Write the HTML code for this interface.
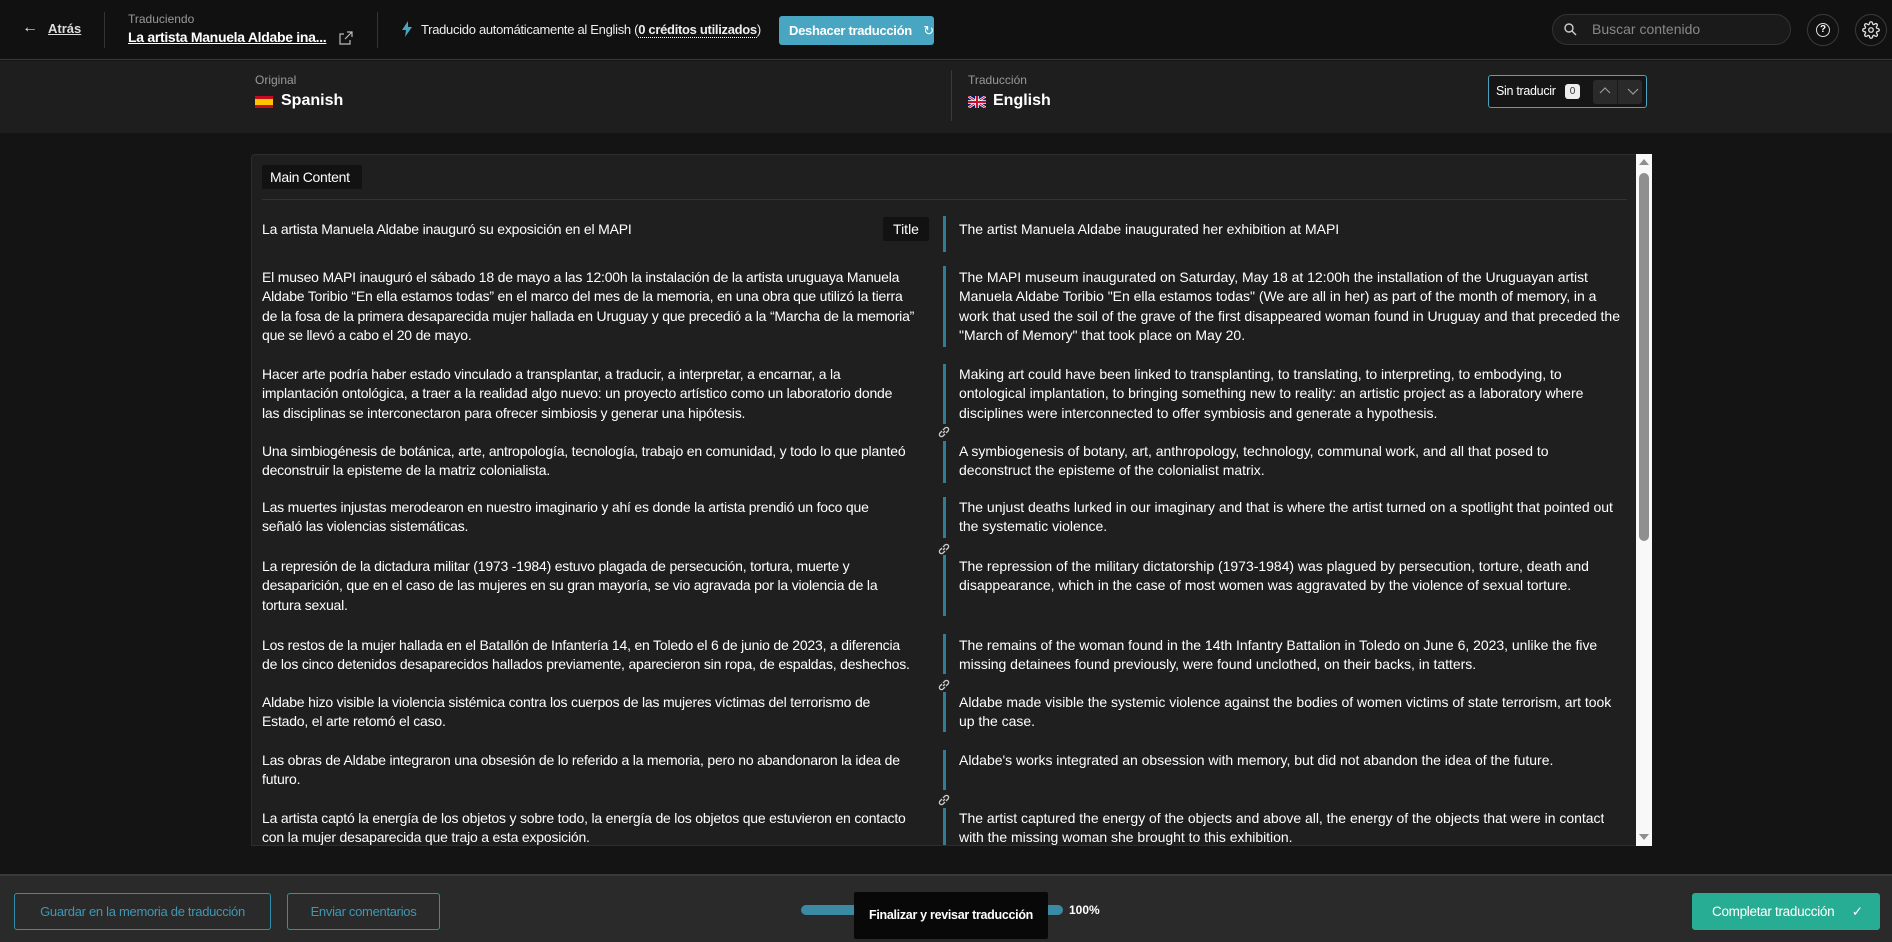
<!DOCTYPE html>
<html><head><meta charset="utf-8"><style>
*{margin:0;padding:0;box-sizing:border-box}
body{width:1892px;height:942px;background:#141414;font-family:"Liberation Sans",sans-serif;color:#fff;position:relative;overflow:hidden}
.a{position:absolute;white-space:nowrap}
.t{font-size:14px;letter-spacing:-0.2px;line-height:19.3px}
.r{letter-spacing:-0.02px}
.bar{position:absolute;left:943px;width:3px;background:#2e7f96}
.lk{position:absolute;left:937px;width:14px;height:14px}
</style></head><body>
<!-- top bar -->
<div class="a" style="left:0;top:0;width:1892px;height:60px;background:#111;border-bottom:1px solid #3a3a3a"></div>
<div class="a" style="left:22px;top:19px;font-size:16px;color:#ddd">←</div>
<div class="a" style="left:48px;top:21px;font-size:13px;text-decoration:underline;font-weight:bold;color:#ddd">Atrás</div>
<div class="a" style="left:104px;top:12px;width:1px;height:36px;background:#333"></div>
<div class="a" style="left:128px;top:12px;font-size:12px;color:#999">Traduciendo</div>
<div class="a" style="left:128px;top:29px;font-size:14px;font-weight:bold;text-decoration:underline;letter-spacing:-0.3px">La artista Manuela Aldabe ina...</div>
<svg class="a" style="left:339px;top:31px" width="14" height="14" viewBox="0 0 14 14" fill="none" stroke="#bbb" stroke-width="1.2"><path d="M8 1h5v5M13 1L6 8M11 9v4H1V3h4"/></svg>
<div class="a" style="left:377px;top:12px;width:1px;height:36px;background:#333"></div>
<svg class="a" style="left:402px;top:21px" width="10" height="16" viewBox="0 0 10 16"><path d="M6 0L0 9h4l-1 7 7-10H6z" fill="#4aa3c0"/></svg>
<div class="a" style="left:421px;top:22px;font-size:13px;letter-spacing:-0.3px;color:#eee">Traducido automáticamente al English (<span style="font-weight:bold;border-bottom:1px dotted #fff">0 créditos utilizados</span>)</div>
<div class="a" style="left:779px;top:16px;width:155px;height:29px;background:#49a6c2;border-radius:3px;font-size:13px;font-weight:bold;line-height:29px;padding-left:10px;letter-spacing:-0.3px">Deshacer traducción <span style="margin-left:8px;font-weight:normal">↻</span></div>
<div class="a" style="left:1552px;top:14px;width:239px;height:31px;border:1px solid #333;border-radius:16px;background:#1a1a1a"></div>
<svg class="a" style="left:1564px;top:23px" width="13" height="13" viewBox="0 0 13 13" fill="none" stroke="#ccc" stroke-width="1.4"><circle cx="5" cy="5" r="4"/><path d="M8 8l4 4"/></svg>
<div class="a" style="left:1592px;top:21px;font-size:14px;color:#888">Buscar contenido</div>
<div class="a" style="left:1807px;top:14px;width:32px;height:32px;border:1px solid #3a3a3a;border-radius:50%"></div>
<div class="a" style="left:1816px;top:23px;width:14px;height:14px;border:1.3px solid #ddd;border-radius:50%;font-size:10px;text-align:center;line-height:12px;font-weight:bold">?</div>
<div class="a" style="left:1855px;top:14px;width:32px;height:32px;border:1px solid #3a3a3a;border-radius:50%"></div>
<svg class="a" style="left:1862px;top:21px" width="18" height="18" viewBox="0 0 24 24" fill="none" stroke="#ddd" stroke-width="1.8"><circle cx="12" cy="12" r="3"/><path d="M19.4 15a1.7 1.7 0 0 0 .3 1.8l.1.1a2 2 0 1 1-2.8 2.8l-.1-.1a1.7 1.7 0 0 0-1.8-.3 1.7 1.7 0 0 0-1 1.5V21a2 2 0 1 1-4 0v-.1a1.7 1.7 0 0 0-1.1-1.5 1.7 1.7 0 0 0-1.8.3l-.1.1a2 2 0 1 1-2.8-2.8l.1-.1a1.7 1.7 0 0 0 .3-1.800 1.7 1.7 0 0 0-1.5-1H3a2 2 0 1 1 0-4h.1a1.7 1.7 0 0 0 1.5-1.1 1.7 1.7 0 0 0-.3-1.8l-.1-.1a2 2 0 1 1 2.8-2.8l.1.1a1.7 1.7 0 0 0 1.8.3H9a1.7 1.7 0 0 0 1-1.5V3a2 2 0 1 1 4 0v.1a1.7 1.7 0 0 0 1 1.5 1.7 1.7 0 0 0 1.8-.3l.1-.1a2 2 0 1 1 2.8 2.8l-.1.1a1.7 1.7 0 0 0-.3 1.8V9a1.7 1.7 0 0 0 1.5 1H21a2 2 0 1 1 0 4h-.1a1.7 1.7 0 0 0-1.5 1z"/></svg>
<!-- second bar -->
<div class="a" style="left:0;top:61px;width:1892px;height:72px;background:#1e1e1e"></div>
<div class="a" style="left:255px;top:73px;font-size:12px;color:#999">Original</div>
<div class="a" style="left:255px;top:96px;width:18px;height:12px;background:linear-gradient(#c60b1e 25%,#ffc400 25%,#ffc400 75%,#c60b1e 75%)"></div>
<div class="a" style="left:281px;top:92px;font-size:16px;font-weight:bold">Spanish</div>
<div class="a" style="left:951px;top:70px;width:1px;height:51px;background:#3a3a3a"></div>
<div class="a" style="left:968px;top:73px;font-size:12px;color:#999">Traducción</div>
<svg class="a" style="left:968px;top:96px" width="18" height="12" viewBox="0 0 18 12"><rect width="18" height="12" fill="#012169"/><path d="M0 0L18 12M18 0L0 12" stroke="#fff" stroke-width="2.5"/><path d="M0 0L18 12M18 0L0 12" stroke="#c8102e" stroke-width="1"/><path d="M9 0v12M0 6h18" stroke="#fff" stroke-width="3.5"/><path d="M9 0v12M0 6h18" stroke="#c8102e" stroke-width="2"/></svg>
<div class="a" style="left:993px;top:92px;font-size:16px;font-weight:bold">English</div>
<div class="a" style="left:1488px;top:75px;width:159px;height:33px;border:1px solid #4aa3c0;border-radius:3px;background:#151515"></div>
<div class="a" style="left:1496px;top:84px;font-size:12.5px;letter-spacing:-0.3px">Sin traducir</div>
<div class="a" style="left:1565px;top:84px;width:15px;height:15px;background:#eee;border-radius:3px;color:#333;font-size:10px;text-align:center;line-height:15px">0</div>
<div class="a" style="left:1593px;top:80px;width:49px;height:24px;background:#2a2a2a;border-radius:3px"></div>
<div class="a" style="left:1617px;top:80px;width:1px;height:24px;background:#1a1a1a"></div>
<svg class="a" style="left:1599px;top:86px" width="40" height="10" viewBox="0 0 40 10" fill="none" stroke="#999" stroke-width="1.2"><path d="M1 7l5-5 5 5M29 3l5 5 5-5"/></svg>
<!-- panel -->
<div class="a" style="left:251px;top:154px;width:1386px;height:692px;background:#1f1f1f;border:1px solid #2d2d2d;border-radius:4px 0 0 0"></div>
<div class="a" style="left:1636px;top:154px;width:16px;height:692px;background:#f8f8f8"></div>
<div class="a" style="left:1639px;top:173px;width:10px;height:368px;background:#8f8f8f;border-radius:5px"></div>
<div class="a" style="left:1639px;top:159px;width:0;height:0;border-left:5px solid transparent;border-right:5px solid transparent;border-bottom:6px solid #8f8f8f"></div>
<div class="a" style="left:1639px;top:834px;width:0;height:0;border-left:5px solid transparent;border-right:5px solid transparent;border-top:6px solid #8f8f8f"></div>
<div class="a" style="left:262px;top:165px;width:100px;height:24px;background:#121212;border-radius:2px;font-size:14px;line-height:24px;padding-left:8px;letter-spacing:-0.3px">Main Content</div>
<div class="a" style="left:262px;top:199px;width:1365px;height:1px;background:#333"></div>
<div class="a" style="left:883px;top:217px;width:46px;height:24px;background:#121212;border-radius:2px;font-size:14px;line-height:24px;text-align:center">Title</div>

<div class="bar" style="top:216px;height:36px"></div>
<div class="bar" style="top:266px;height:81px"></div>
<div class="bar" style="top:364px;height:60px"></div>
<div class="bar" style="top:441px;height:42px"></div>
<div class="bar" style="top:497px;height:41px"></div>
<div class="bar" style="top:555px;height:61px"></div>
<div class="bar" style="top:634px;height:40px"></div>
<div class="bar" style="top:692px;height:40px"></div>
<div class="bar" style="top:750px;height:40px"></div>
<div class="bar" style="top:808px;height:37px"></div>
<svg class="lk" style="top:425px" viewBox="0 0 14 14" fill="none" stroke="#ccc" stroke-width="1.3"><path d="M6 8l2-2M5 6L3 8a2 2 0 0 0 3 3l2-2M9 8l2-2a2 2 0 0 0-3-3L6 5"/></svg>
<svg class="lk" style="top:542px" viewBox="0 0 14 14" fill="none" stroke="#ccc" stroke-width="1.3"><path d="M6 8l2-2M5 6L3 8a2 2 0 0 0 3 3l2-2M9 8l2-2a2 2 0 0 0-3-3L6 5"/></svg>
<svg class="lk" style="top:678px" viewBox="0 0 14 14" fill="none" stroke="#ccc" stroke-width="1.3"><path d="M6 8l2-2M5 6L3 8a2 2 0 0 0 3 3l2-2M9 8l2-2a2 2 0 0 0-3-3L6 5"/></svg>
<svg class="lk" style="top:793px" viewBox="0 0 14 14" fill="none" stroke="#ccc" stroke-width="1.3"><path d="M6 8l2-2M5 6L3 8a2 2 0 0 0 3 3l2-2M9 8l2-2a2 2 0 0 0-3-3L6 5"/></svg>

<div class="a t" style="left:262px;top:220px">La artista Manuela Aldabe inauguró su exposición en el MAPI</div>
<div class="a t" style="left:262px;top:268px">El museo MAPI inauguró el sábado 18 de mayo a las 12:00h la instalación de la artista uruguaya Manuela<br>Aldabe Toribio “En ella estamos todas” en el marco del mes de la memoria, en una obra que utilizó la tierra<br>de la fosa de la primera desaparecida mujer hallada en Uruguay y que precedió a la “Marcha de la memoria”<br>que se llevó a cabo el 20 de mayo.</div>
<div class="a t" style="left:262px;top:365px">Hacer arte podría haber estado vinculado a transplantar, a traducir, a interpretar, a encarnar, a la<br>implantación ontológica, a traer a la realidad algo nuevo: un proyecto artístico como un laboratorio donde<br>las disciplinas se interconectaron para ofrecer simbiosis y generar una hipótesis.</div>
<div class="a t" style="left:262px;top:442px">Una simbiogénesis de botánica, arte, antropología, tecnología, trabajo en comunidad, y todo lo que planteó<br>deconstruir la episteme de la matriz colonialista.</div>
<div class="a t" style="left:262px;top:498px">Las muertes injustas merodearon en nuestro imaginario y ahí es donde la artista prendió un foco que<br>señaló las violencias sistemáticas.</div>
<div class="a t" style="left:262px;top:557px">La represión de la dictadura militar (1973 -1984) estuvo plagada de persecución, tortura, muerte y<br>desaparición, que en el caso de las mujeres en su gran mayoría, se vio agravada por la violencia de la<br>tortura sexual.</div>
<div class="a t" style="left:262px;top:636px">Los restos de la mujer hallada en el Batallón de Infantería 14, en Toledo el 6 de junio de 2023, a diferencia<br>de los cinco detenidos desaparecidos hallados previamente, aparecieron sin ropa, de espaldas, deshechos.</div>
<div class="a t" style="left:262px;top:693px">Aldabe hizo visible la violencia sistémica contra los cuerpos de las mujeres víctimas del terrorismo de<br>Estado, el arte retomó el caso.</div>
<div class="a t" style="left:262px;top:751px">Las obras de Aldabe integraron una obsesión de lo referido a la memoria, pero no abandonaron la idea de<br>futuro.</div>
<div class="a t" style="left:262px;top:809px;height:36px;overflow:hidden">La artista captó la energía de los objetos y sobre todo, la energía de los objetos que estuvieron en contacto<br>con la mujer desaparecida que trajo a esta exposición.</div>

<div class="a t r" style="left:959px;top:220px">The artist Manuela Aldabe inaugurated her exhibition at MAPI</div>
<div class="a t r" style="left:959px;top:268px">The MAPI museum inaugurated on Saturday, May 18 at 12:00h the installation of the Uruguayan artist<br>Manuela Aldabe Toribio "En ella estamos todas" (We are all in her) as part of the month of memory, in a<br>work that used the soil of the grave of the first disappeared woman found in Uruguay and that preceded the<br>"March of Memory" that took place on May 20.</div>
<div class="a t r" style="left:959px;top:365px">Making art could have been linked to transplanting, to translating, to interpreting, to embodying, to<br>ontological implantation, to bringing something new to reality: an artistic project as a laboratory where<br>disciplines were interconnected to offer symbiosis and generate a hypothesis.</div>
<div class="a t r" style="left:959px;top:442px">A symbiogenesis of botany, art, anthropology, technology, communal work, and all that posed to<br>deconstruct the episteme of the colonialist matrix.</div>
<div class="a t r" style="left:959px;top:498px">The unjust deaths lurked in our imaginary and that is where the artist turned on a spotlight that pointed out<br>the systematic violence.</div>
<div class="a t r" style="left:959px;top:557px">The repression of the military dictatorship (1973-1984) was plagued by persecution, torture, death and<br>disappearance, which in the case of most women was aggravated by the violence of sexual torture.</div>
<div class="a t r" style="left:959px;top:636px">The remains of the woman found in the 14th Infantry Battalion in Toledo on June 6, 2023, unlike the five<br>missing detainees found previously, were found unclothed, on their backs, in tatters.</div>
<div class="a t r" style="left:959px;top:693px">Aldabe made visible the systemic violence against the bodies of women victims of state terrorism, art took<br>up the case.</div>
<div class="a t r" style="left:959px;top:751px">Aldabe's works integrated an obsession with memory, but did not abandon the idea of the future.</div>
<div class="a t r" style="left:959px;top:809px;height:36px;overflow:hidden">The artist captured the energy of the objects and above all, the energy of the objects that were in contact<br>with the missing woman she brought to this exhibition.</div>

<!-- bottom -->
<div class="a" style="left:0;top:874px;width:1892px;height:68px;background:#2a2a2a;border-top:2px solid #3a3a3a"></div>
<div class="a" style="left:14px;top:893px;width:257px;height:37px;border:1px solid #2f8fae;border-radius:3px;color:#3f97b3;font-size:13px;line-height:35px;text-align:center;letter-spacing:-0.3px">Guardar en la memoria de traducción</div>
<div class="a" style="left:287px;top:893px;width:153px;height:37px;border:1px solid #2f8fae;border-radius:3px;color:#3f97b3;font-size:13px;line-height:35px;text-align:center;letter-spacing:-0.3px">Enviar comentarios</div>
<div class="a" style="left:801px;top:905px;width:262px;height:10px;background:#3a8aa3;border-radius:5px"></div>
<div class="a" style="left:1069px;top:903px;font-size:12px;font-weight:bold">100%</div>
<div class="a" style="left:854px;top:892px;width:194px;height:47px;background:#080808;border-radius:2px;font-size:12.5px;font-weight:bold;text-align:center;line-height:47px;letter-spacing:-0.3px">Finalizar y revisar traducción</div>
<div class="a" style="left:1692px;top:893px;width:188px;height:37px;background:#27ad93;border-radius:3px;font-size:13.5px;line-height:37px;padding-left:20px;letter-spacing:-0.3px">Completar traducción <span style="margin-left:14px">✓</span></div>
</body></html>
